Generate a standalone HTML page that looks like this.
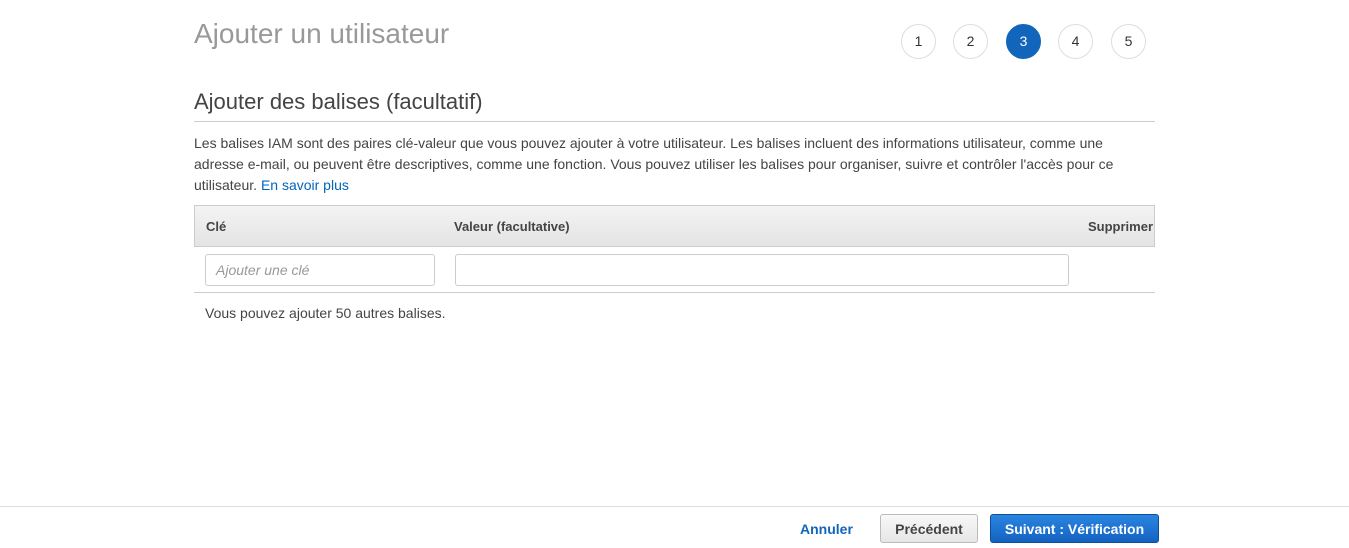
<!DOCTYPE html>
<html><head><meta charset="utf-8"><style>
body{margin:0;width:1349px;height:548px;background:#fff;font-family:"Liberation Sans",Arial,sans-serif;position:relative;overflow:hidden;color:#444}
.a{position:absolute}
.c{position:absolute;top:24px;width:33px;height:33px;border:1px solid #ddd;border-radius:50%;text-align:center;line-height:33px;font-size:14px;color:#333;box-sizing:content-box}
.btn{position:absolute;top:514px;height:29px;border-radius:3px;font-weight:bold;font-size:14px;line-height:29px;text-align:center;box-sizing:border-box}
</style></head><body>
<div class="a" style="left:194px;top:18px;font-size:28px;color:#999">Ajouter un utilisateur</div>
<div class="c" style="left:901px">1</div>
<div class="c" style="left:953px">2</div>
<div class="c" style="left:1006px;background:#1166bb;border-color:#1166bb;color:#fff">3</div>
<div class="c" style="left:1058px">4</div>
<div class="c" style="left:1111px">5</div>
<div class="a" style="left:194px;top:89px;font-size:22px;color:#444">Ajouter des balises (facultatif)</div>
<div class="a" style="left:194px;top:121px;width:961px;height:1px;background:#ccc"></div>
<div class="a" style="left:194px;top:133px;width:960px;font-size:14px;line-height:21px;color:#444">Les balises IAM sont des paires clé-valeur que vous pouvez ajouter à votre utilisateur. Les balises incluent des informations utilisateur, comme une adresse e-mail, ou peuvent être descriptives, comme une fonction. Vous pouvez utiliser les balises pour organiser, suivre et contrôler l'accès pour ce utilisateur. <span style="color:#0066bb">En savoir plus</span></div>
<div class="a" style="left:194px;top:205px;width:961px;height:42px;background:linear-gradient(#f3f3f3,#e4e4e4);border:1px solid #ccc;box-sizing:border-box;font-size:13px;font-weight:bold;color:#444">
<span class="a" style="left:11px;top:13px">Clé</span><span class="a" style="left:259px;top:13px">Valeur (facultative)</span><span class="a" style="left:893px;top:13px">Supprimer</span></div>
<div class="a" style="left:205px;top:254px;width:230px;height:32px;border:1px solid #ccc;border-radius:3px;box-sizing:border-box;font-size:14px;font-style:italic;color:#999;line-height:30px;padding-left:10px">Ajouter une clé</div>
<div class="a" style="left:455px;top:254px;width:614px;height:32px;border:1px solid #ccc;border-radius:3px;box-sizing:border-box"></div>
<div class="a" style="left:194px;top:292px;width:961px;height:1px;background:#ccc"></div>
<div class="a" style="left:205px;top:305px;font-size:14px;color:#444">Vous pouvez ajouter 50 autres balises.</div>
<div class="a" style="left:0;top:506px;width:1349px;height:1px;background:#ddd"></div>
<div class="a" style="left:800px;top:521px;font-size:14px;font-weight:bold;color:#1166bb">Annuler</div>
<div class="btn" style="left:880px;width:98px;border:1px solid #bbb;background:linear-gradient(#f8f8f8,#e6e6e6);color:#444">Précédent</div>
<div class="btn" style="left:990px;width:169px;border:1px solid #0f4f99;background:linear-gradient(#2a86e0,#1462c2);color:#fff">Suivant : Vérification</div>
</body></html>
